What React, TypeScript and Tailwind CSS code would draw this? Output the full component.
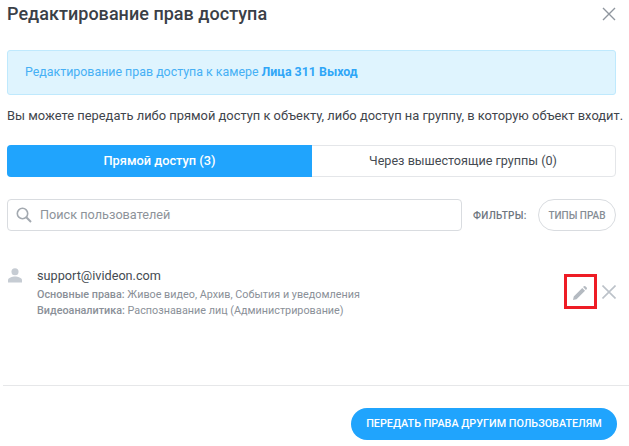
export default function App() {
  return (
    <div className="w-[629px] h-[446px] bg-white overflow-hidden text-[#3b4148]" style={{ fontFamily: "Roboto, sans-serif" }}>
      <div className="h-[50px] pl-[7px] pr-[13px] pt-[2px] flex items-start justify-between">
        <h1 className="text-[18px] leading-[24px] font-medium tracking-[0.03px] text-[#3a4047]">Редактирование прав доступа</h1>
        <svg width="14" height="14" viewBox="0 0 14 14" className="mt-[5px]" fill="none" stroke="#8f969e" strokeWidth="1.4">
          <path d="M1 1l12 12M13 1L1 13" />
        </svg>
      </div>
      <div className="mx-[7px] w-[609px] h-[45px] flex items-center pl-[17px] pb-[1px] bg-[#dff4fe] border border-[#bfe9fd] rounded-[3px] text-[12.4px] text-[#46b0f5]">
        <span>Редактирование прав доступа к камере <b className="font-bold text-[#2fa6f7]">Лица 311 Выход</b></span>
      </div>
      <p className="ml-[7px] mt-[12px] text-[12.9px] leading-[18px] text-[#3f454c] whitespace-nowrap">
        Вы можете передать либо прямой доступ к объекту, либо доступ на группу, в которую объект входит.
      </p>
      <div className="ml-[7px] mt-[20px] w-[609px] h-[32px] flex rounded-[4px] border border-[#e4e6e9] text-[12.6px]">
        <div className="w-[305px] -m-px h-[32px] flex items-center justify-center rounded-l-[4px] bg-[#20a4fd] text-white font-medium text-[12.8px]">Прямой доступ (3)</div>
        <div className="flex-1 flex items-center justify-center text-[#454b52]">Через вышестоящие группы (0)</div>
      </div>
      <div className="ml-[7px] mt-[22px] w-[609px] flex items-center">
        <div className="w-[455px] h-[32px] flex items-center border border-[#d9dce0] rounded-[4px] pl-[8px] gap-[8px]">
          <svg width="16" height="16" viewBox="0 0 16 16" fill="none" stroke="#a3a9b0" strokeWidth="1.6">
            <circle cx="6.5" cy="6.5" r="5.2" />
            <path d="M10.3 10.3L15 15" strokeWidth="2" />
          </svg>
          <span className="text-[12.7px] text-[#8d939a]">Поиск пользователей</span>
        </div>
        <span className="ml-[11px] text-[10px] font-medium tracking-[0.3px] text-[#6e7680]">ФИЛЬТРЫ:</span>
        <div className="ml-auto w-[78px] h-[32px] flex items-center justify-center rounded-full border border-[#d9dce0] text-[10px] font-medium text-[#868d95]">ТИПЫ ПРАВ</div>
      </div>
      <div className="ml-[8px] mt-[36px] w-[608px] h-[70px] flex">
        <svg width="14" height="15" viewBox="0 0 15 16" className="mt-[1px]" fill="#c6ccd3">
          <circle cx="7.5" cy="4" r="3.8" />
          <path d="M0 15.5v-2.6c0-2.6 4.6-3.9 7.5-3.9s7.5 1.3 7.5 3.9v2.6z" />
        </svg>
        <div className="ml-[15px] flex-1 pt-[1px]">
          <div className="text-[12.7px] leading-[16px] text-[#454b52]">support@ivideon.com</div>
          <div className="mt-[3px] text-[10.8px] leading-[16px] text-[#8a9098]"><span className="font-medium">Основные права:</span> Живое видео, Архив, События и уведомления</div>
          <div className="text-[10.8px] leading-[16px] text-[#8a9098]"><span className="font-medium">Видеоаналитика:</span> Распознавание лиц (Администрирование)</div>
        </div>
        <div className="mt-[7px] w-[33px] h-[35px] border-[3px] border-[#ee1c25] flex items-center justify-center">
          <svg width="14" height="14" viewBox="0 0 15 15" className="mt-[2px] -ml-[1px]" fill="#b4bac1">
            <path d="M0 15l.8-3.8L9.9 2.1l3 3-9.1 9.1zM10.8 1.2l.8-.8a1.2 1.2 0 0 1 1.7 0l1.3 1.3a1.2 1.2 0 0 1 0 1.7l-.8.8z" />
          </svg>
        </div>
        <svg width="14" height="14" viewBox="0 0 14 14" className="ml-[5px] mt-[18px]" fill="none" stroke="#bcc2c9" strokeWidth="1.6">
          <path d="M0.5 0.5l13 13M13.5 0.5l-13 13" />
        </svg>
      </div>
      <div className="ml-[3px] mt-[48px] h-px bg-[#e6e7e9]" />
      <div className="mt-[22px] ml-[351px] w-[266px] h-[32px] flex items-center justify-center rounded-full bg-[#20a4fd] text-white text-[10.8px] font-medium whitespace-nowrap">
        ПЕРЕДАТЬ ПРАВА ДРУГИМ ПОЛЬЗОВАТЕЛЯМ
      </div>
    </div>
  );
}
